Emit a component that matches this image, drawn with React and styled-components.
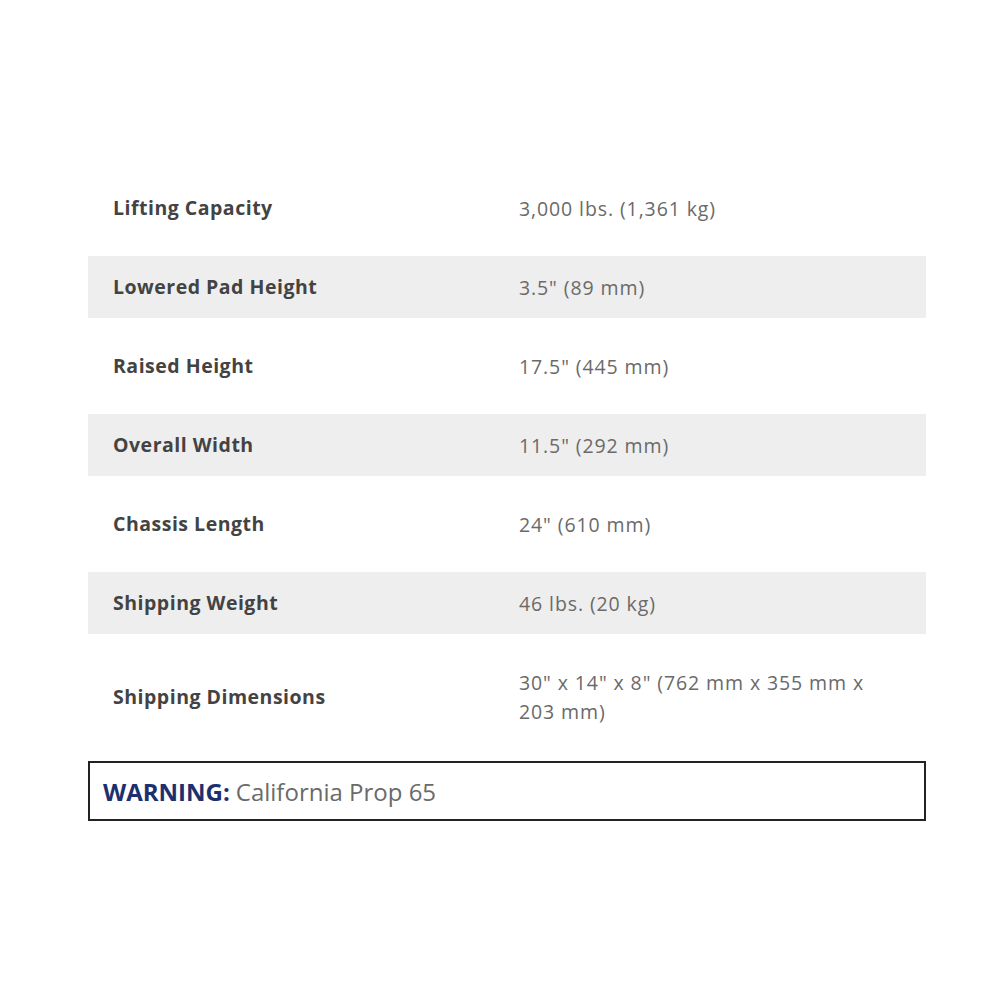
import React from 'react';
import styled, {createGlobalStyle} from 'styled-components';

const GlobalStyle = createGlobalStyle`
    body {
        margin: 0;
        background: #fff;
        font-family: "Open Sans", "Noto Sans", sans-serif;
    }
`;

const Page = styled.div`
    padding: 160px 0 0 88px;
    width: 838px;
`;

const SpecTable = styled.div`
    display: flex;
    flex-direction: column;
    margin-bottom: 2px;
`;

const Row = styled.div`
    display: grid;
    grid-template-columns: 406px 1fr;
    align-items: center;
    padding: ${p => p.$shaded ? '16.5px 0' : '33.5px 0'};
    background: ${p => p.$shaded ? '#eeeeee' : 'transparent'};
`;

const Label = styled.div`
    padding-left: 25px;
    font-size: 19.5px;
    font-weight: 700;
    letter-spacing: 0.5px;
    line-height: 28px;
    color: #434343;
`;

const Value = styled.div`
    padding: 0 30px 0 25px;
    font-size: 19.5px;
    letter-spacing: 0.9px;
    line-height: 29px;
    color: #6a6a6a;
`;

const Warning = styled.div`
    height: 56px;
    display: flex;
    align-items: center;
    padding: 0 13px;
    border: 2px solid #222;
    font-size: 24px;
    color: #6a6a6a;
`;

const WarningTag = styled.strong`
    color: #1c2f6e;
    font-weight: 700;
    margin-right: 6px;
`;

const specs = [
    ['Lifting Capacity', '3,000 lbs. (1,361 kg)'],
    ['Lowered Pad Height', '3.5" (89 mm)'],
    ['Raised Height', '17.5" (445 mm)'],
    ['Overall Width', '11.5" (292 mm)'],
    ['Chassis Length', '24" (610 mm)'],
    ['Shipping Weight', '46 lbs. (20 kg)'],
    ['Shipping Dimensions', '30" x 14" x 8" (762 mm x 355 mm x 203 mm)'],
];

const App = () => {
    return (
        <Page>
            <GlobalStyle />
            <SpecTable>
                {specs.map(([label, value], i) => (
                    <Row key={label} $shaded={i % 2 === 1}>
                        <Label>{label}</Label>
                        <Value>{value}</Value>
                    </Row>
                ))}
            </SpecTable>
            <Warning>
                <WarningTag>WARNING:</WarningTag>California Prop 65
            </Warning>
        </Page>
    );
}

export default App;
